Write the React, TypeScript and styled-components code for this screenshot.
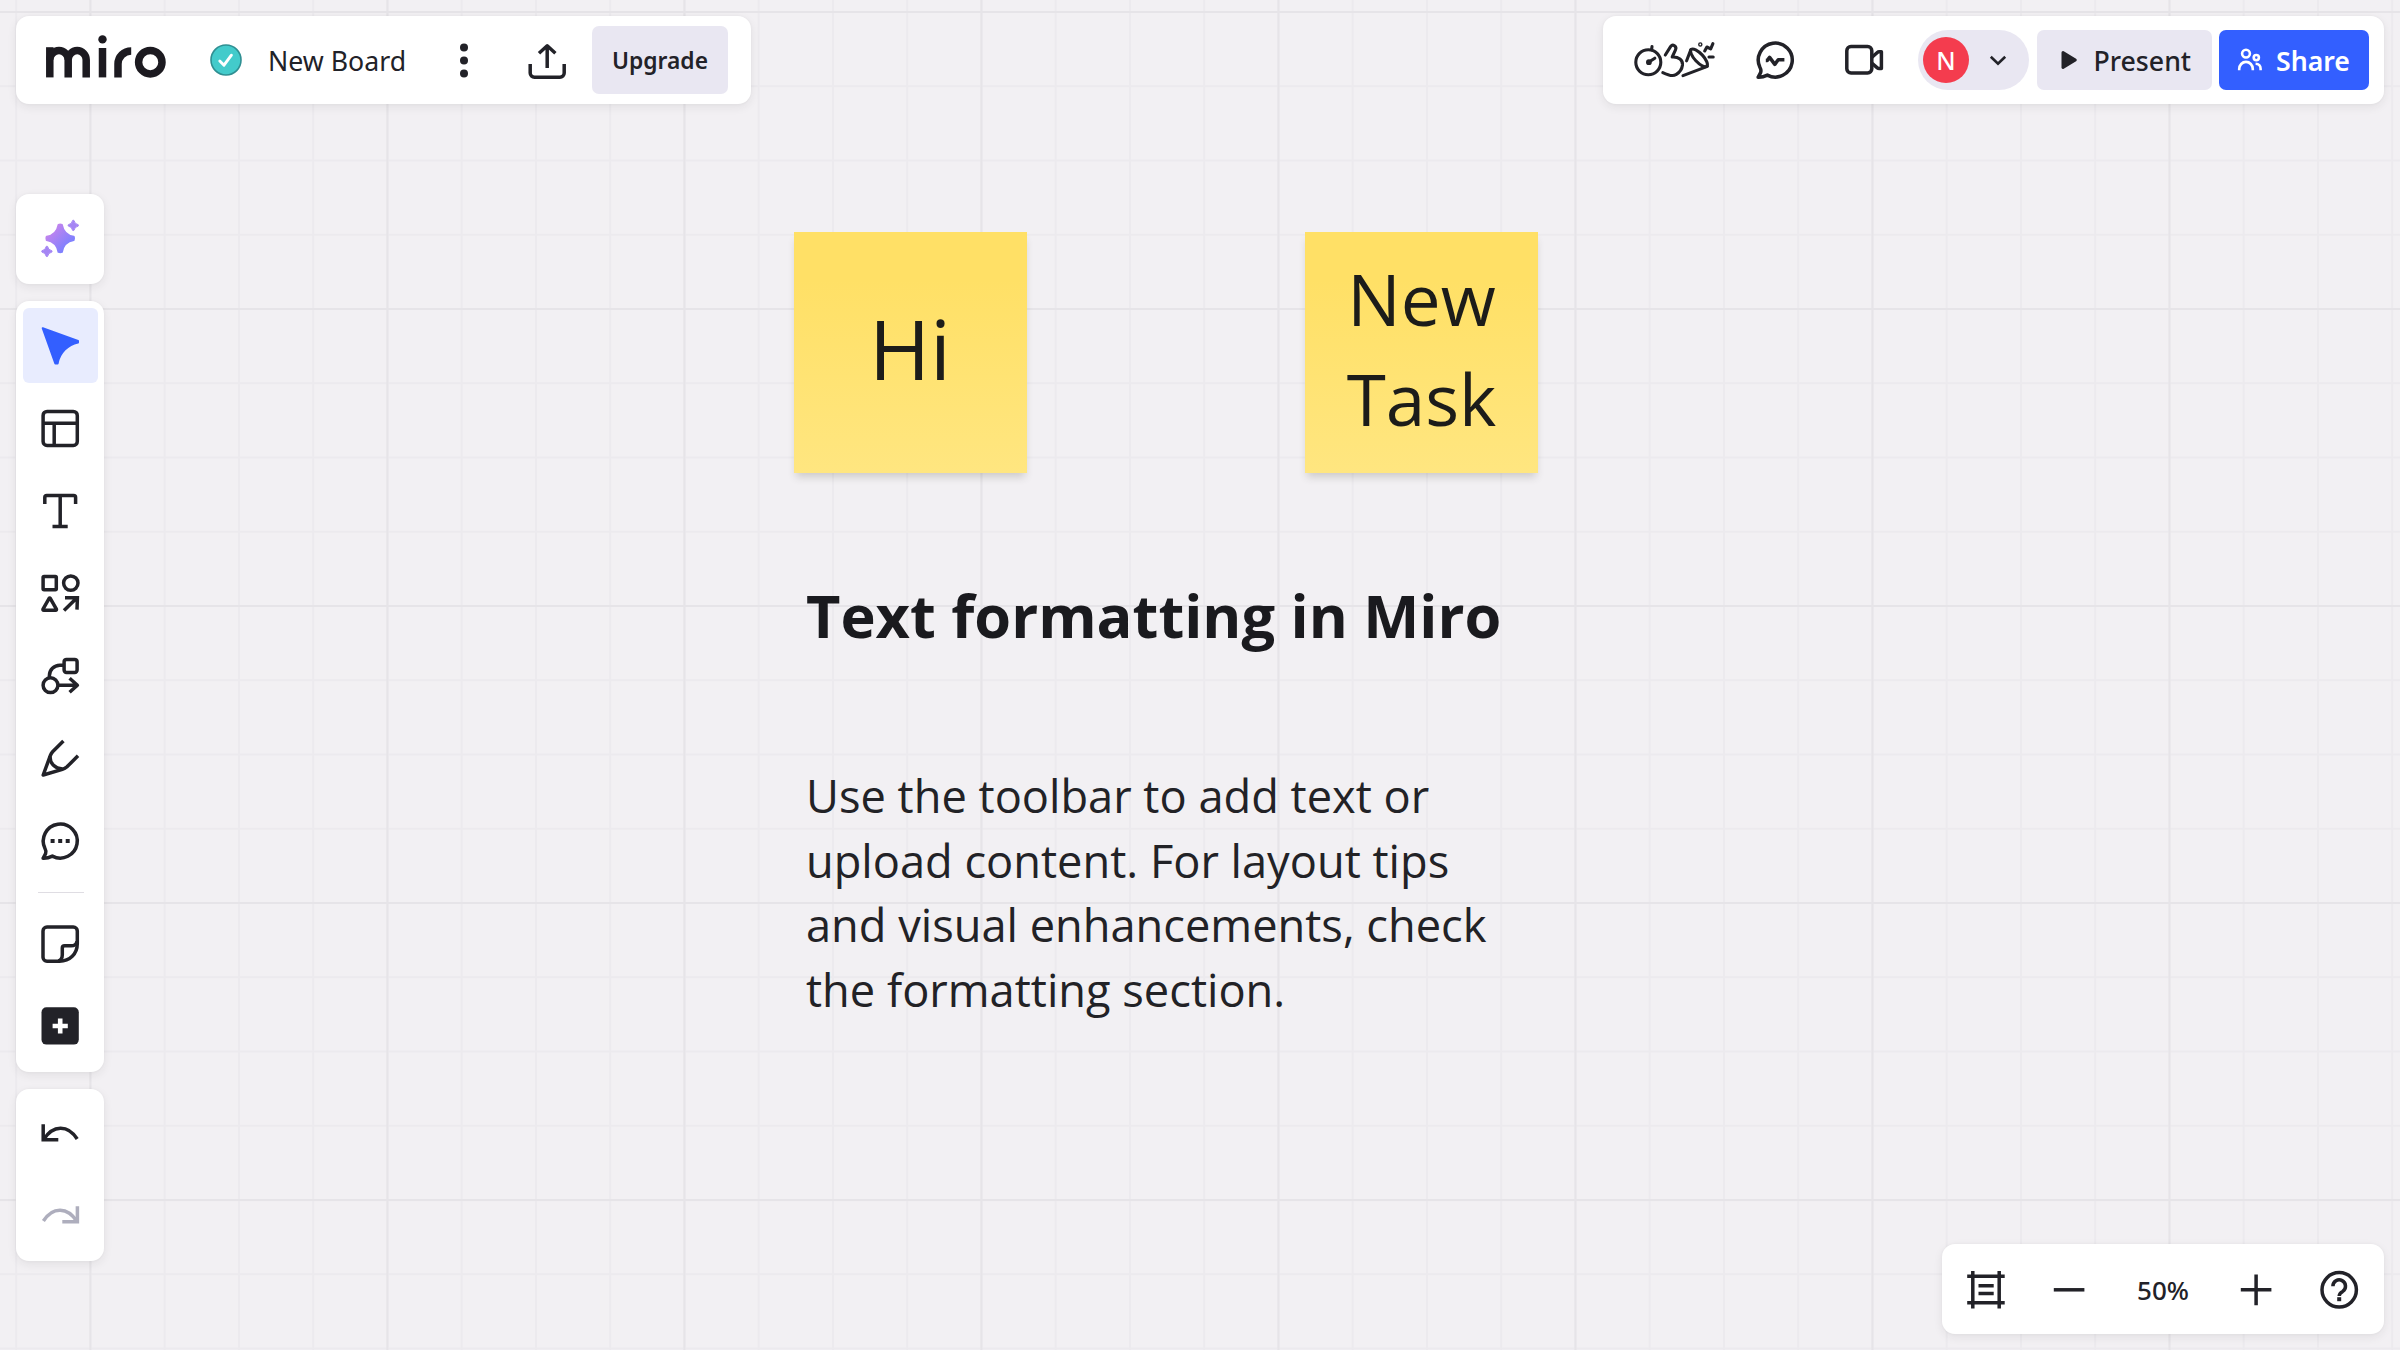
import React from "react";
import styled, { createGlobalStyle } from "styled-components";

const GlobalStyle = createGlobalStyle`
  * { box-sizing: border-box; }
  html, body { margin: 0; padding: 0; overflow: hidden; }
  body { font-family: "Noto Sans", "Open Sans", sans-serif; color: #222228; }
`;

const MAJOR = 297.03;
const MINOR = MAJOR / 4;

const Board = styled.main`
  position: relative;
  width: 2400px;
  height: 1350px;
  overflow: hidden;
  background-color: #f2f0f3;
  background-image:
    linear-gradient(to right, #e6e4e8 2px, transparent 2px),
    linear-gradient(to bottom, #e6e4e8 2px, transparent 2px),
    linear-gradient(to right, #eceaee 2px, transparent 2px),
    linear-gradient(to bottom, #eceaee 2px, transparent 2px);
  background-size:
    ${MAJOR}px 100%,
    100% ${MAJOR}px,
    ${MINOR}px 100%,
    100% ${MINOR}px;
  background-position: 89.4px 0, 0 11px, 15.2px 0, 0 11px;
`;

const Chrome = styled.div`
  position: relative;
  display: flex;
  flex-direction: column;
  justify-content: space-between;
  height: 100%;
  padding: 16px;
`;

const Header = styled.header`
  display: flex;
  justify-content: space-between;
`;

const Panel = styled.div`
  display: flex;
  align-items: center;
  background: #fff;
  border-radius: 13px;
  box-shadow: 0 3px 10px rgba(34, 34, 40, 0.08), 0 0 3px rgba(34, 34, 40, 0.04);
`;

const BoardBar = styled(Panel)`
  width: 735px;
  height: 88px;
  padding: 0 23px 0 29px;
`;

const ActionBar = styled(Panel)`
  width: 781px;
  height: 88px;
  padding: 0 15px 0 27px;
`;

const Brand = styled.span`
  display: flex;
  width: 122px;
  height: 50px;
`;

const Status = styled.span`
  display: flex;
  width: 32px;
  height: 32px;
  margin-left: 43px;
`;

const BoardName = styled.span`
  width: 141px;
  margin-left: 26px;
  padding-top: 1px;
  font-size: 26.7px;
  line-height: 36px;
  white-space: nowrap;
`;

const IconButton = styled.button<{ $gap?: number; $w?: number }>`
  display: flex;
  align-items: center;
  justify-content: center;
  flex: none;
  width: ${(p) => p.$w ?? 40}px;
  height: 40px;
  margin: 0 0 0 ${(p) => p.$gap ?? 0}px;
  padding: 0;
  border: 0;
  background: none;
  color: inherit;
`;

const Button = styled.button<{ $primary?: boolean; $w: number; $gap: number }>`
  display: flex;
  align-items: center;
  flex: none;
  width: ${(p) => p.$w}px;
  height: 60px;
  margin-left: ${(p) => p.$gap}px;
  padding: 0 0 0 ${(p) => (p.$primary ? 19 : 24)}px;
  border: 0;
  border-radius: 7px;
  background: ${(p) => (p.$primary ? "#335fff" : "#e9e7f2")};
  color: ${(p) => (p.$primary ? "#fff" : "#222228")};
  font: ${(p) => (p.$primary ? 600 : 500)} 26.7px / 36px "Noto Sans", sans-serif;
  white-space: nowrap;
`;

const UpgradeButton = styled(Button)`
  height: 68px;
  padding: 1px 0 0;
  justify-content: center;
  font-weight: 600;
  font-size: 22.8px;
`;

const ButtonLabel = styled.span<{ $gap: number }>`
  margin-left: ${(p) => p.$gap}px;
  padding-top: 1px;
`;

const Profile = styled.div`
  display: flex;
  align-items: center;
  flex: none;
  width: 111px;
  height: 60px;
  margin-left: 34px;
  padding-left: 5px;
  border-radius: 30px;
  background: #e9e7f2;
`;

const Avatar = styled.span`
  display: grid;
  place-items: center;
  width: 46px;
  height: 46px;
  border-radius: 50%;
  background: #f43c4e;
  color: #fff;
  font: 500 25px / 46px "Noto Sans", sans-serif;
`;

const SideBar = styled.aside`
  display: flex;
  flex-direction: column;
  gap: 17px;
  width: 88px;
  height: 1140px;
`;

const Tools = styled(Panel)<{ $h: number }>`
  flex: none;
  flex-direction: column;
  align-items: flex-start;
  gap: 7.5px;
  width: 88px;
  height: ${(p) => p.$h}px;
  padding: 7px 0 0 7px;
`;

const Tool = styled.button<{ $active?: boolean; $muted?: boolean }>`
  display: grid;
  place-items: center;
  flex: none;
  width: 75px;
  height: 75px;
  padding: 0 1px 0 0;
  border: 0;
  border-radius: 6px;
  background: ${(p) => (p.$active ? "#e8ecfe" : "none")};
  color: ${(p) => (p.$active ? "#335fff" : p.$muted ? "#aeaebd" : "#222228")};
`;

const Separator = styled.hr`
  width: 46px;
  height: 1px;
  margin: 6px 0 6px 15px;
  border: 0;
  background: #dfdde3;
`;

const Body = styled.div`
  display: flex;
  justify-content: space-between;
  align-items: flex-end;
`;

const ZoomBar = styled(Panel)`
  width: 442px;
  height: 90px;
  padding: 1px 0 0 7px;
  gap: 8px;
`;

const ZoomLevel = styled.span`
  width: 96px;
  text-align: center;
  font-size: 26px;
  font-weight: 500;
  line-height: 36px;
`;

const Note = styled.div<{ $x: number; $size: number }>`
  position: absolute;
  left: ${(p) => p.$x}px;
  top: 232px;
  display: flex;
  align-items: center;
  justify-content: center;
  width: 233px;
  height: 241px;
  padding-bottom: 8px;
  background: linear-gradient(#ffe066 20%, #ffe680);
  box-shadow: 0 6px 8px -2px rgba(60, 55, 40, 0.2);
  color: #1c1c1a;
  font: 400 ${(p) => p.$size}px / 1.4 "Open Sans", "Noto Sans", sans-serif;
  text-align: center;
`;

const Heading = styled.h1`
  position: absolute;
  left: 806px;
  top: 573px;
  margin: 0;
  font: 700 59.5px / 84px "Open Sans", "Noto Sans", sans-serif;
  color: #1a1a1e;
  white-space: nowrap;
`;

const Paragraph = styled.p`
  position: absolute;
  left: 806px;
  top: 764px;
  margin: 0;
  font: 400 45.2px / 64.5px "Open Sans", "Noto Sans", sans-serif;
  color: #222226;
  white-space: nowrap;
`;

const Svg = styled.svg`
  display: block;
  flex: none;
  overflow: visible;
  fill: none;
  stroke: currentColor;
  stroke-width: 3.5;
  stroke-linejoin: round;
`;

const Icon = ({ w = 40, h = 40, children }: { w?: number; h?: number; children: React.ReactNode }) => (
  <Svg width={w} height={h} viewBox={`0 0 ${w} ${h}`}>
    {children}
  </Svg>
);

const Logo = () => (
  <Icon w={122} h={50}>
    <g stroke="#1c1a20" strokeWidth="7.5" strokeLinejoin="miter">
      <path d="M4.8 42.4V12.2" />
      <path d="M4.8 24.8a9.2 9.2 0 0 1 18.4 0v17.6" />
      <path d="M23.2 24.8a9 9.2 0 0 1 18 0v17.6" />
      <path d="M57.5 13v29.4" />
      <path d="M73 42.4V29.1a13.2 13.2 0 0 1 13.2-13.2" />
      <circle cx="105.3" cy="27.2" r="11.7" />
      <circle cx="57.5" cy="4.4" r="4.2" fill="#1c1a20" stroke="none" />
    </g>
  </Icon>
);

const CheckBadge = () => (
  <Icon w={32} h={32}>
    <circle cx="16" cy="16" r="15" fill="#43cbcb" stroke="#2f8f92" strokeWidth="1.6" />
    <path d="M9.8 17l4.2 4.2 7.4-10" stroke="#fff" strokeWidth="2.9" strokeLinecap="round" />
  </Icon>
);

const Kebab = () => (
  <Icon>
    <g fill="currentColor" stroke="none">
      <circle cx="20" cy="7.4" r="4" />
      <circle cx="20" cy="20.5" r="4" />
      <circle cx="20" cy="33.6" r="4" />
    </g>
  </Icon>
);

const Upload = () => (
  <Icon>
    <path d="M3.2 24v9a4.3 4.3 0 0 0 4.3 4.3h25.4a4.3 4.3 0 0 0 4.3-4.3v-9" />
    <path d="M20.2 28V6.5M12 13.2l8.2-7.4 8.2 7.4" />
  </Icon>
);

const Activities = () => (
  <Icon w={88} h={40}>
    <g strokeWidth="3.1" strokeLinecap="round">
      <circle cx="18.3" cy="22.3" r="12.5" />
      <path d="M22 6.6l-.4 3M19.3 21.8L24.8 18.2" />
      <circle cx="18.9" cy="22.2" r="1.6" strokeWidth="2.6" />
      <path d="M35.3 15l5.4-8.6q1.6-2 3.8-.6 2.2 1.8 1 4L42.2 17c6.5-.4 10.8 3 10.3 8-.5 4-3.3 7.7-6.5 9.6-2.6 1.8-8 .6-13.2-2" />
      <path d="M60.8 9.8l-4.2 11M53 35.6l24.4-9.2" />
      <ellipse cx="69" cy="17.8" rx="11.4" ry="4.3" transform="rotate(47 69 17.8)" />
      <path d="M74.7 11l2.2-4 3.8 1.8 2.2-5.2M79 17h4.2" />
      <circle cx="70.3" cy="4.4" r=".7" />
    </g>
  </Icon>
);

const BUBBLE = "M5 27.5A17 17 0 1 1 12.4 35.1Q7.6 37.5 3.1 37.3L5.6 32.6Q6.5 30.2 5 27.5Z";

const Reactions = () => (
  <Icon>
    <path d={BUBBLE} />
    <path d="M10.8 20.4h1.5l2.3-3 5.2 7 3.4-4.6h6.2" />
  </Icon>
);

const Camera = () => (
  <Icon>
    <rect x="2.8" y="6.6" width="25" height="26.4" rx="4.2" />
    <path d="M28 17.2l5.3-4.7q.8-.7 1.8-.7h2.3v16.8h-2.3q-1 0-1.8-.7L28 23.3" />
  </Icon>
);

const Chevron = () => (
  <Icon w={16} h={12}>
    <path d="M.8 2.7l7.2 7 7.2-7" strokeWidth="2.6" strokeLinejoin="miter" />
  </Icon>
);

const Play = () => (
  <Icon w={17} h={20}>
    <path d="M2 2.6l12.3 7.4L2 17.4z" fill="currentColor" strokeWidth="3" />
  </Icon>
);

const People = () => (
  <Icon w={24} h={22}>
    <g strokeWidth="2.6">
      <circle cx="8" cy="4.6" r="3.9" />
      <circle cx="18.3" cy="8.6" r="2.6" />
      <path d="M1.2 21.2V20a6.7 7 0 0 1 13.6 0v1.2M17.6 14.8c3.2 0 5 2.2 5 5v1.4" />
    </g>
  </Icon>
);

const star = (x: number, y: number, r: number) => {
  const t = r * 0.13;
  const c = r * 0.26;
  return (
    `M${x - t} ${y - r}Q${x} ${y - r * 1.06} ${x + t} ${y - r}Q${x + c} ${y - c} ${x + r} ${y - t}` +
    `Q${x + r * 1.06} ${y} ${x + r} ${y + t}Q${x + c} ${y + c} ${x + t} ${y + r}` +
    `Q${x} ${y + r * 1.06} ${x - t} ${y + r}Q${x - c} ${y + c} ${x - r} ${y + t}` +
    `Q${x - r * 1.06} ${y} ${x - r} ${y - t}Q${x - c} ${y - c} ${x - t} ${y - r}Z`
  );
};

const Sparkles = () => (
  <Icon>
    <defs>
      <linearGradient id="spark" x1="0" y1="0" x2="1" y2="1">
        <stop offset="0.2" stopColor="#c184ee" />
        <stop offset="0.8" stopColor="#7b80ff" />
      </linearGradient>
    </defs>
    <path d={star(20.2, 19.4, 13.6)} fill="url(#spark)" stroke="url(#spark)" strokeWidth="1.8" />
    <path d={star(33.3, 6.4, 5)} fill="#a585f4" stroke="#a585f4" strokeWidth="1" />
    <path d={star(6.9, 32.4, 5)} fill="#a585f4" stroke="#a585f4" strokeWidth="1" />
  </Icon>
);

const Cursor = () => (
  <Icon>
    <path
      d="M2.7 2.2L38 15v1.4C28 18.6 19.6 26.5 17.6 37.5h-2.3z"
      fill="currentColor"
      strokeWidth="2"
    />
  </Icon>
);

const Template = () => (
  <Icon>
    <rect x="3.1" y="3.4" width="34.2" height="34" rx="4" />
    <path d="M3 15.2h34M14.2 15.2v22" />
  </Icon>
);

const TextIcon = () => (
  <Icon>
    <path d="M4.8 13V6.6q0-2 2-2h26.8q2 0 2 2V13M20.2 5v30.4M12.5 35.4h15.2" />
  </Icon>
);

const Shapes = () => (
  <Icon>
    <rect x="3.1" y="3.6" width="13.2" height="13.2" rx="1" />
    <circle cx="30.8" cy="10.1" r="7.2" />
    <path d="M9 25.6q.7-1 1.4 0l6 10.6q.4 1.1-.8 1.1H3.8q-1.2 0-.8-1.1z" />
    <path d="M24 37.6L37 24.7M25 24.8h12.4l-.4 11.8" strokeLinejoin="miter" />
  </Icon>
);

const Connector = () => (
  <Icon>
    <rect x="24.1" y="3.4" width="13" height="13" rx="2.4" />
    <circle cx="10.5" cy="29.2" r="7.4" />
    <path d="M9.4 21.6v-2a10.4 10.4 0 0 1 10.4-10.4H24M18 29.2h19.4M29.6 22.2l7.8 7-7.8 7" />
  </Icon>
);

const Pen = () => (
  <Icon>
    <path d="M23.4 3L12.6 13.7q-1.4 1.5-2.2 3.7L3.2 37l19.2-5.6q2.6-.8 4.6-2.6l11-11" />
    <path d="M10 18.4c-.2 6.8 4.6 12 12.6 12.6" />
  </Icon>
);

const Comment = () => (
  <Icon>
    <path d={BUBBLE} />
    <path d="M10.6 20h4M18.2 20h4M25.7 20h4" strokeWidth="4" />
  </Icon>
);

const Sticky = () => (
  <Icon>
    <path d="M19.5 37.2H7a4 4 0 0 1-4-4V7a4 4 0 0 1 4-4h26.3a4 4 0 0 1 4 4v12.5c0 10.5-7.5 17.7-17.8 17.7z" />
    <path d="M18.4 37c3-1 3.9-3 3.9-6.2v-6.7q0-2.3 2.3-2.3H31c3.3 0 5.4-1.4 6-4.6" />
  </Icon>
);

const AddIcon = () => (
  <Icon>
    <rect x="1.5" y="1.3" width="37.3" height="37.3" rx="5" fill="currentColor" stroke="none" />
    <path d="M12.6 20h15.2M20.2 12.4v15.2" stroke="#fff" strokeWidth="4.6" />
  </Icon>
);

const UNDO = "M3.2 10.3V25.8H18.3M3.6 25.6C13 10.5 28 10.5 37.2 25";

const Undo = () => (
  <Icon>
    <path d={UNDO} strokeLinejoin="miter" />
  </Icon>
);

const Redo = () => (
  <Icon>
    <path d={UNDO} strokeLinejoin="miter" transform="translate(40.6 0) scale(-1 1)" />
  </Icon>
);

const Frames = () => (
  <Icon>
    <path d="M6.8 1v37.4M33.2 1v37.4M1.2 6.3h37.5M1.2 32.7h37.5M12.5 15.8h15.2M12.5 23.6h15.2" />
  </Icon>
);

const Minus = () => (
  <Icon>
    <path d="M4.8 19.8h30.6" />
  </Icon>
);

const Plus = () => (
  <Icon>
    <path d="M4.8 19.8h30.6M20.1 4.6v30.6" />
  </Icon>
);

const Help = () => (
  <Icon>
    <circle cx="20.2" cy="19.8" r="17.2" />
    <path d="M13.9 16.2a6.3 6.3 0 1 1 9.8 5.2q-3.5 2.1-3.5 4.6" />
    <path d="M18.2 29.2h4" strokeWidth="4" />
  </Icon>
);

export default function App() {
  return (
    <>
      <GlobalStyle />
      <Board>
        <Note $x={793.5} $size={83}>Hi</Note>
        <Note $x={1305} $size={71}>
          New
          <br />
          Task
        </Note>
        <Heading>Text formatting in Miro</Heading>
        <Paragraph>
          Use the toolbar to add text or
          <br />
          upload content. For layout tips
          <br />
          and visual enhancements, check
          <br />
          the formatting section.
        </Paragraph>

        <Chrome>
          <Header>
            <BoardBar>
              <Brand><Logo /></Brand>
              <Status><CheckBadge /></Status>
              <BoardName>New Board</BoardName>
              <IconButton $gap={35}><Kebab /></IconButton>
              <IconButton $gap={43}><Upload /></IconButton>
              <UpgradeButton $w={136} $gap={25}>Upgrade</UpgradeButton>
            </BoardBar>
            <ActionBar>
              <IconButton $w={88}><Activities /></IconButton>
              <IconButton $gap={37}><Reactions /></IconButton>
              <IconButton $gap={49}><Camera /></IconButton>
              <Profile>
                <Avatar>N</Avatar>
                <IconButton $w={16} $gap={21}><Chevron /></IconButton>
              </Profile>
              <Button $w={175} $gap={8}>
                <Play />
                <ButtonLabel $gap={15.5}>Present</ButtonLabel>
              </Button>
              <Button $primary $w={150} $gap={7}>
                <People />
                <ButtonLabel $gap={14}>Share</ButtonLabel>
              </Button>
            </ActionBar>
          </Header>

          <Body>
            <SideBar>
              <Tools $h={90}>
                <Tool><Sparkles /></Tool>
              </Tools>
              <Tools $h={771}>
                <Tool $active><Cursor /></Tool>
                <Tool><Template /></Tool>
                <Tool><TextIcon /></Tool>
                <Tool><Shapes /></Tool>
                <Tool><Connector /></Tool>
                <Tool><Pen /></Tool>
                <Tool><Comment /></Tool>
                <Separator />
                <Tool><Sticky /></Tool>
                <Tool><AddIcon /></Tool>
              </Tools>
              <Tools $h={172}>
                <Tool><Undo /></Tool>
                <Tool $muted><Redo /></Tool>
              </Tools>
            </SideBar>
            <ZoomBar>
              <Tool><Frames /></Tool>
              <Tool><Minus /></Tool>
              <ZoomLevel>50%</ZoomLevel>
              <Tool><Plus /></Tool>
              <Tool><Help /></Tool>
            </ZoomBar>
          </Body>
        </Chrome>
      </Board>
    </>
  );
}
